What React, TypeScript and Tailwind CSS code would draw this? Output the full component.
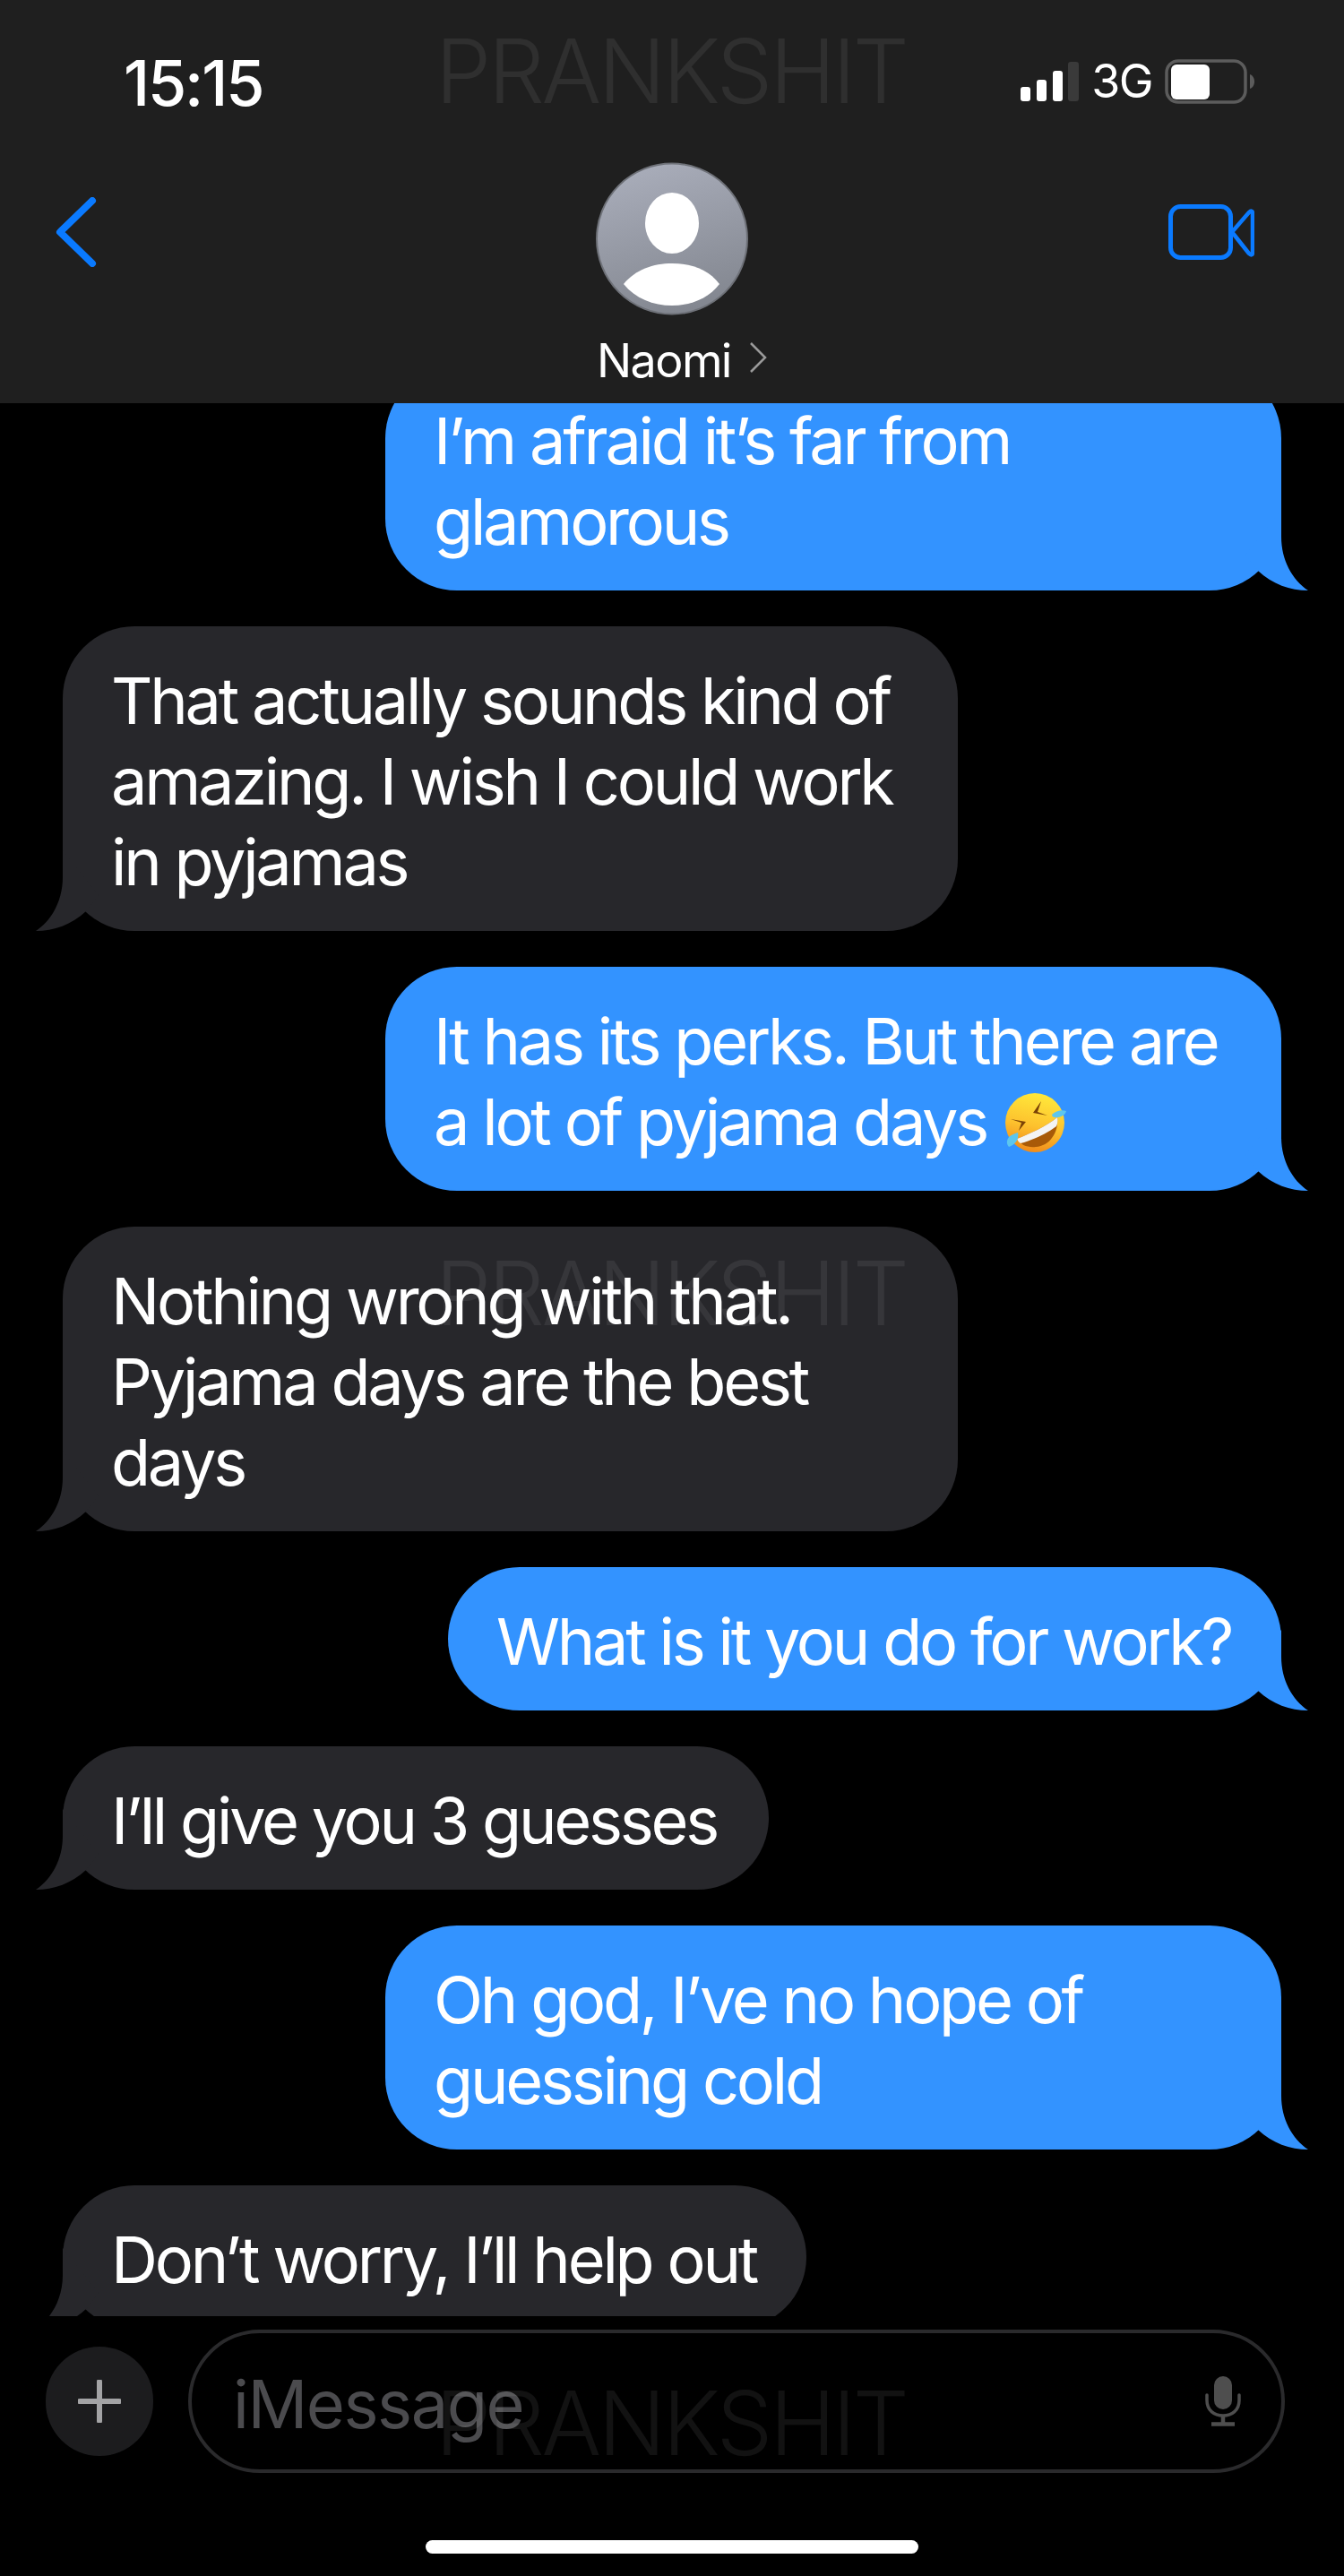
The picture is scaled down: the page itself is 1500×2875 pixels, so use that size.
import type { ReactNode } from "react";

const font = { fontFamily: "Inter, sans-serif" };

const BLUE = "#3393ff";
const GRAY = "#27272b";

const Tail = ({ color, flip }: { color: string; flip: boolean }) => (
  <svg
    viewBox="0 0 90 90"
    className={
      flip
        ? "absolute bottom-0 left-[-30px] w-[90px] h-[90px] -scale-x-100"
        : "absolute bottom-0 right-[-30px] w-[90px] h-[90px]"
    }
  >
    <path
      d="M60 0 L60 30 C60 56 72 78 90 90 C70 90 50 83 34 68 L20 50 Z"
      fill={color}
    />
  </svg>
);

const Bubble = ({
  me,
  width,
  lines,
}: {
  me?: boolean;
  width: string;
  lines: ReactNode[];
}) => (
  <div
    className={`relative shrink-0 rounded-[80px] pl-[54px] pr-[50px] pt-[38px] pb-[32px] text-white text-[72px] leading-[90px] tracking-[-0.045em] whitespace-nowrap ${width} ${
      me ? "self-end bg-[#3393ff]" : "self-start bg-[#27272b]"
    }`}
  >
    {lines.map((l, i) => (
      <div key={i}>{l}</div>
    ))}
    <Tail color={me ? BLUE : GRAY} flip={!me} />
  </div>
);

const RoflEmoji = () => (
  <svg viewBox="0 0 70 70" className="inline-block w-[70px] h-[70px] align-[-11px] ml-[2px]">
    <defs>
      <linearGradient id="rofl" x1="0.6" y1="0" x2="0.4" y2="1">
        <stop offset="0" stopColor="#ffe93b" />
        <stop offset="0.55" stopColor="#fdc22e" />
        <stop offset="1" stopColor="#f08a1a" />
      </linearGradient>
    </defs>
    <circle cx="35" cy="34" r="33" fill="url(#rofl)" />
    <path d="M15 52 C28 47 48 38 60 28 C62 44 52 60 36 61 C27 62 19 59 15 52 Z" fill="#a85a08" />
    <path d="M15 52 C28 47 48 38 60 28 C61 32 60 36 59 38 C47 47 31 54 19 57 C17 56 16 54 15 52 Z" fill="#f4f4f4" />
    <path d="M8 30 L25 33 L17 43 L20 34 Z" fill="#7a4206" />
    <path d="M42 10 L33 23 L49 26 L38 22 Z" fill="#7a4206" />
    <path d="M54 25 C58 21 65 19 70 21 C69 26 62 29 57 28 C55 28 54 26 54 25 Z" fill="#5cc6ee" />
    <path d="M16 45 C17 50 16 57 6 61 C3 58 3 53 7 49 C10 47 13 46 16 45 Z" fill="#5cc6ee" />
  </svg>
);

const Watermark = ({ top }: { top: string }) => (
  <div
    className={`absolute left-[486px] pointer-events-none text-[99px] leading-none font-light tracking-[-0.033em] text-white/[0.07] ${top}`}
  >
    PRANKSHIT
  </div>
);

const StatusIcons = () => (
  <div className="flex items-center">
    <svg viewBox="0 0 65 44" className="w-[65px] h-[44px]">
      <rect x="0" y="28" width="11" height="16" rx="3" fill="#fff" />
      <rect x="18" y="20" width="11" height="24" rx="3" fill="#fff" />
      <rect x="36" y="10" width="11" height="34" rx="3" fill="#fff" />
      <rect x="53" y="0" width="12" height="44" rx="3" fill="#3a3a3a" />
    </svg>
    <span className="ml-[14px] text-[52px] leading-none tracking-[-0.03em]">3G</span>
    <svg viewBox="0 0 100 50" className="ml-[14px] w-[100px] h-[50px]">
      <rect x="2" y="2" width="88" height="46" rx="13" fill="none" stroke="#5c5c5c" strokeWidth="3.5" />
      <rect x="7" y="6" width="43" height="39" rx="6" fill="#fff" />
      <path d="M95 17 C98 18 100 21 100 25 C100 29 98 32 95 33 Z" fill="#5c5c5c" />
    </svg>
  </div>
);

const Avatar = () => (
  <svg viewBox="0 0 170 171" className="w-[170px] h-[171px]">
    <defs>
      <linearGradient id="avatar" x1="0.3" y1="0" x2="0.6" y2="1">
        <stop offset="0" stopColor="#a9adba" />
        <stop offset="1" stopColor="#82868f" />
      </linearGradient>
    </defs>
    <circle cx="85" cy="85.5" r="84" fill="url(#avatar)" stroke="#6e7178" strokeWidth="2" />
    <ellipse cx="85" cy="68" rx="30" ry="34" fill="#fff" />
    <path d="M31 136 C44 120 64 113 85 113 C106 113 126 120 138 136 C126 152 106 160 85 160 C64 160 44 152 31 136 Z" fill="#fff" />
  </svg>
);

export default function App() {
  return (
    <div style={font} className="relative flex flex-col w-[1500px] h-[2875px] bg-black text-white overflow-hidden">
      <header className="shrink-0 h-[450px] bg-[#1f1f1f]">
        <div className="flex items-center justify-between h-[181px] pl-[138px] pr-[100px]">
          <span className="text-[70px] leading-none font-medium tracking-[-0.03em] mt-[4px]">15:15</span>
          <StatusIcons />
        </div>
        <div className="grid grid-cols-[603px_170px_1fr] pl-[62px] pr-[100px]">
          <svg viewBox="0 0 46 78" className="mt-[39px] w-[46px] h-[78px]">
            <path d="M41 4 L5 39 L41 74" fill="none" stroke="#0a7aff" strokeWidth="8" strokeLinecap="round" strokeLinejoin="round" />
          </svg>
          <div>
            <Avatar />
            <div className="flex items-center gap-[20px] w-[210px] pl-[1px] mt-[23px]">
              <span className="text-[52px] leading-[56px] tracking-[-0.03em]">Naomi</span>
              <svg viewBox="0 0 20 36" className="w-[20px] h-[36px] -mt-[8px]">
                <path d="M2 2 L18 18 L2 34" fill="none" stroke="#9a9a9a" strokeWidth="2.5" />
              </svg>
            </div>
          </div>
          <svg viewBox="0 0 96 62" className="justify-self-end mt-[47px] w-[96px] h-[62px]">
            <rect x="2.5" y="2.5" width="67" height="57" rx="11" fill="none" stroke="#0a7aff" strokeWidth="5" />
            <path d="M71 31 L90 9 C92 7 94 7 94 10 L94 54 C94 57 92 57 90 55 Z" fill="none" stroke="#0a7aff" strokeWidth="4.5" strokeLinejoin="round" />
          </svg>
        </div>
      </header>

      <main className="flex-1 min-h-0 overflow-hidden flex flex-col gap-[40px] pl-[70px] pr-[70px]">
        <div className="-mt-[42px]" />
        <Bubble me width="w-[1000px] -mt-[39px]" lines={["I’m afraid it’s far from", "glamorous"]} />
        <Bubble width="w-[999px]" lines={["That actually sounds kind of", "amazing. I wish I could work", "in pyjamas"]} />
        <Bubble me width="w-[1000px]" lines={["It has its perks. But there are", <>a lot of pyjama days <RoflEmoji /></>]} />
        <Bubble width="w-[999px]" lines={["Nothing wrong with that.", "Pyjama days are the best", "days"]} />
        <Bubble me width="w-[930px]" lines={["What is it you do for work?"]} />
        <Bubble width="w-[788px]" lines={["I’ll give you 3 guesses"]} />
        <Bubble me width="w-[1000px]" lines={["Oh god, I’ve no hope of", "guessing cold"]} />
        <Bubble width="w-[830px]" lines={["Don’t worry, I’ll help out"]} />
      </main>

      <footer className="shrink-0 h-[290px] flex flex-col">
        <div className="flex items-center pl-[51px] pt-[15px] gap-[39px]">
          <div className="flex items-center justify-center w-[120px] h-[122px] rounded-full bg-[#1c1c1e]">
            <svg viewBox="0 0 48 48" className="w-[48px] h-[48px]">
              <path d="M24 2 V46 M2 24 H46" stroke="#a3a3a5" strokeWidth="6" strokeLinecap="round" />
            </svg>
          </div>
          <div className="flex items-center justify-between w-[1224px] h-[160px] rounded-full border-4 border-[#2a2a2c] pl-[46px] pr-[45px]">
            <span className="text-[74px] leading-none tracking-[-0.02em] text-[#4b4b4e] mt-[6px]">iMessage</span>
            <svg viewBox="0 0 40 56" className="w-[40px] h-[56px]">
              <rect x="10" y="0" width="20" height="37" rx="10" fill="#4e4e4e" />
              <path d="M2 21 V27 C2 38 10 44 20 44 C30 44 38 38 38 27 V21" fill="none" stroke="#4e4e4e" strokeWidth="3.5" strokeLinecap="round" />
              <path d="M20 44 V52 M7 53.5 H33" fill="none" stroke="#4e4e4e" strokeWidth="4.5" />
            </svg>
          </div>
        </div>
        <div className="self-center mt-[75px] w-[550px] h-[15px] rounded-full bg-white" />
      </footer>

      <Watermark top="top-[30px]" />
      <Watermark top="top-[1394px]" />
      <Watermark top="top-[2655px]" />
    </div>
  );
}
